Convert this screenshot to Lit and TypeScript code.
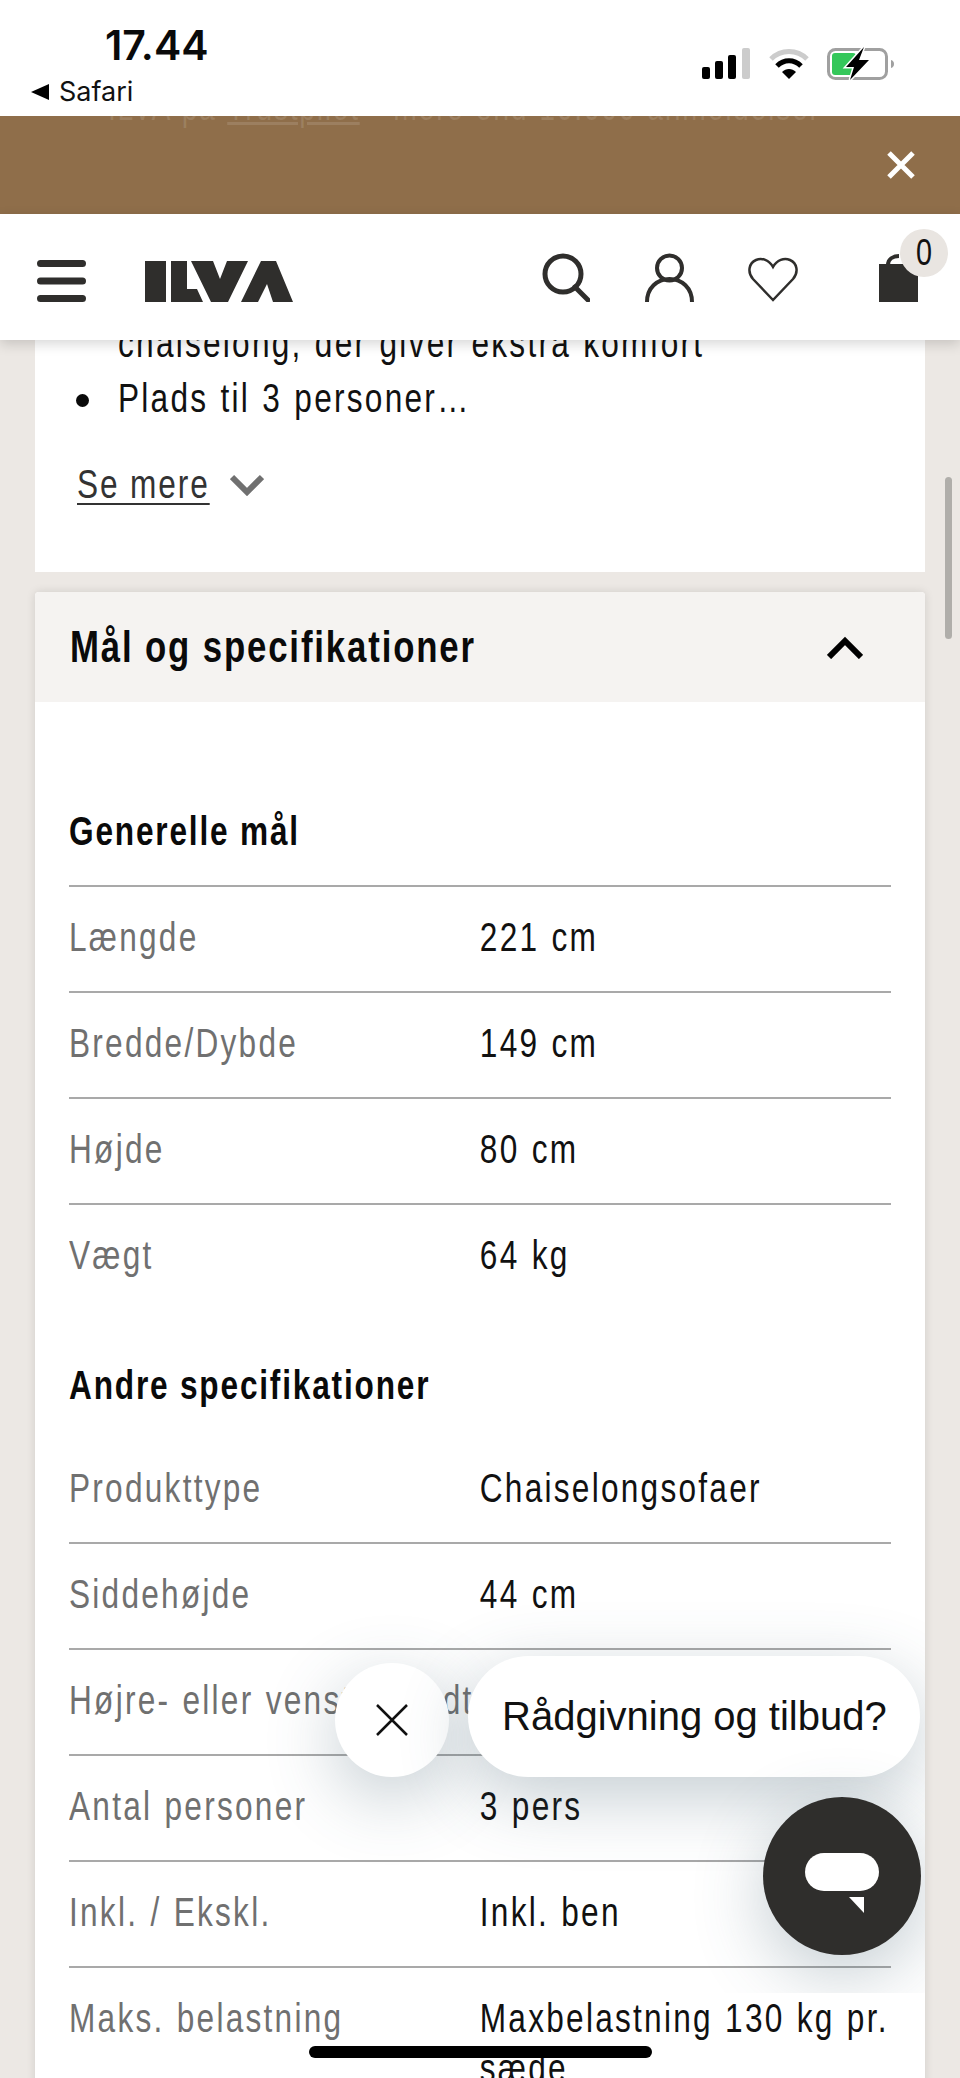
import { LitElement, html, css } from "lit";
import { customElement } from "lit/decorators.js";

const group1 = [["Længde","221 cm"],["Bredde/Dybde","149 cm"],["Højde","80 cm"],["Vægt","64 kg"]];
const group2 = [["Produkttype","Chaiselongsofaer"],["Siddehøjde","44 cm"],["Højre- eller venstrevendt",""],["Antal personer","3 pers"],["Inkl. / Ekskl.","Inkl. ben"],["Maks. belastning","Maxbelastning 130 kg pr. sæde"]];

@customElement("app-root")
export class AppRoot extends LitElement {
  static styles = css`
    :host { display:block; position:relative; width:960px; height:2078px; overflow:hidden; background:#ece8e4; font-family:"Liberation Sans",sans-serif; color:#111; }
    * { box-sizing:border-box; }
    .nar { transform:scaleX(.79); transform-origin:left center; white-space:nowrap; }
    .status { height:116px; background:#fff; position:relative; display:flex; justify-content:space-between; padding:24px 65px 0 31px; font-family:Inter,"Liberation Sans",sans-serif; }
    .clock { display:flex; flex-direction:column; }
    .time { font-size:41px; font-weight:600; line-height:42px; margin-left:74px; color:#0a0a0a; }
    .back { display:flex; align-items:center; gap:10px; font-size:27px; line-height:32px; margin-top:10px; }
    .sys { display:flex; align-items:flex-start; padding-top:24px; }
    .wifi { margin-left:18px; } .bat { margin-left:17px; margin-top:-3px; }
    .banner { height:98px; background:#8f6e4a; position:relative; overflow:hidden; display:flex; justify-content:flex-end; align-items:center; padding-right:45px; }
    .ghost { position:absolute; left:108px; top:-29px; color:rgba(255,255,255,.12); font-size:36px; letter-spacing:2.1px; word-spacing:2px; }
    .nav { height:126px; background:#fff; position:relative; z-index:2; box-shadow:0 4px 12px rgba(0,0,0,.16); }
    .nav-row { display:flex; align-items:flex-end; height:88px; padding-left:37px; }
    .logo { margin-left:59px; }
    .icons { margin-left:auto; display:flex; align-items:flex-end; padding-right:42px; }
    .ic-search { margin-right:55px; } .ic-user { margin-right:54px; } .ic-heart { margin-right:81px; }
    .bag { position:relative; display:block; height:49px; }
    .badge { position:absolute; left:21px; top:-24px; width:48px; height:48px; border-radius:50%; background:#e9e5e1; display:flex; align-items:center; justify-content:center; color:#111; }
    .badge span { display:block; font-size:36px; line-height:40px; transform:scaleX(.8); }
    .main { padding:0 35px; }
    .card { background:#fff; }
    .card.first { height:256px; margin-top:-24px; }
    .line { display:flex; align-items:center; height:55px; padding-left:41px; font-size:40px; letter-spacing:2.85px; word-spacing:1.5px; }
    .dot { flex:none; width:13px; height:13px; border-radius:50%; background:#0a0a0a; margin-right:29px; margin-top:4px; }
    .gap { flex:none; width:42px; }
    .more { display:flex; align-items:center; margin:31px 0 0 42px; height:55px; font-size:40px; letter-spacing:2.4px; color:#333; }
    .more span { display:block; flex:none; width:153px; text-decoration:underline; text-underline-offset:5px; text-decoration-thickness:2px; }
    .acc { margin-top:20px; box-shadow:0 0 10px rgba(0,0,0,.12); border-radius:4px 4px 0 0; background:#fff; }
    .acc-head { height:110px; background:#f5f3f1; display:flex; align-items:center; justify-content:space-between; padding:0 62px 0 35px; border-radius:4px 4px 0 0; }
    .acc-head h2 { margin:0; font-size:44px; font-weight:700; letter-spacing:2.35px; color:#0a0a0a; flex:none; width:420px; }
    .body { padding:102px 34px 0; }
    h3 { margin:0; font-size:40px; line-height:55px; font-weight:700; letter-spacing:2.3px; color:#0a0a0a; }
    .t1 { margin-top:26px; border-top:2px solid #a9a9a9; }
    .t2 { margin-top:25px; }
    .row { min-height:106px; border-bottom:2px solid #a9a9a9; padding:25px 0 0; }
    .row:last-child { border-bottom:none; }
    .cells { display:grid; grid-template-columns:520px 1fr; width:1060px; font-size:40px; line-height:50px; letter-spacing:2.85px; word-spacing:1.5px; white-space:normal; }
    .l { color:#707070; white-space:nowrap; } .v { color:#111; }
    .h2 { margin-top:47px; }
    .scroll { position:absolute; left:945px; top:477px; width:7px; height:162px; border-radius:4px; background:#b0aeaa; z-index:3; }
    .widget { position:absolute; left:200px; top:1540px; width:725px; height:453px; overflow:hidden; z-index:3; }
    .closeb { position:absolute; left:135px; top:123px; width:114px; height:114px; border-radius:50%; background:#fff; display:flex; align-items:center; justify-content:center; box-shadow:0 20px 70px rgba(60,90,105,.3); }
    .bubble { position:absolute; left:268px; top:116px; width:452px; height:121px; border-radius:61px; background:#fff; display:flex; align-items:center; padding-left:34px; font-size:40px; color:#111; box-shadow:0 20px 70px rgba(60,90,105,.3); white-space:nowrap; }
    .chat { position:absolute; left:563px; top:257px; width:158px; height:158px; border-radius:50%; background:#2f2e2c; display:flex; align-items:center; justify-content:center; box-shadow:0 20px 70px rgba(60,90,105,.3); }
    .chat svg { margin-top:14px; }
    .home { position:absolute; left:309px; top:2046px; width:343px; height:12px; border-radius:6px; background:#000; z-index:4; }
  `;

  rows(list: string[][]) {
    return list.map(([l, v]) => html`<div class="row"><div class="cells nar"><div class="l">${l}</div><div class="v">${v}</div></div></div>`);
  }

  render() {
    return html`
      <div class="status">
        <div class="clock">
          <div class="time">17.44</div>
          <div class="back"><svg width="18" height="16" viewBox="0 0 18 16"><path d="M0 8 18 0v16z" fill="#000"/></svg>Safari</div>
        </div>
        <div class="sys">
          <svg class="sig" width="48" height="31" viewBox="0 0 48 31">
            <rect x="0" y="19" width="8" height="12" rx="2" fill="#000"/><rect x="13" y="13" width="8" height="18" rx="2" fill="#000"/><rect x="26" y="7" width="8" height="24" rx="2" fill="#000"/><rect x="40" y="0" width="8" height="31" rx="2" fill="#ccc"/>
          </svg>
          <svg class="wifi" width="42" height="31" viewBox="0 0 42 31" fill="none">
            <path d="M3 11C13 1 29 1 39 11" stroke="#ccc" stroke-width="5"/>
            <path d="M9 18C16 11 26 11 33 18" stroke="#000" stroke-width="5"/>
            <path d="M14 24C18 20 24 20 28 24L21 31z" fill="#000"/>
          </svg>
          <svg class="bat" width="68" height="36" viewBox="0 0 68 36" fill="none">
            <rect x="1.500" y="4.500" width="58" height="29" rx="7" stroke="#a0a0a0" stroke-width="3"/>
            <rect x="5" y="8" width="24" height="22" rx="3" fill="#34c75a"/>
            <path d="M64 15c2 .5 3 2 3 4s-1 3.500-3 4z" fill="#a0a0a0"/>
            <path d="M37 2 19 22h8l-4 13 19-20H32z" fill="#000" stroke="#fff" stroke-width="3" paint-order="stroke"/>
          </svg>
        </div>
      </div>
      <div class="banner">
        <div class="ghost nar">ILVA på <u>Trustpilot</u> - mere end 10.000 anmeldelser</div>
        <svg width="28" height="28" viewBox="0 0 28 28"><path d="M2 2l24 24M26 2 2 26" stroke="#fff" stroke-width="5"/></svg>
      </div>
      <div class="nav">
        <div class="nav-row">
          <svg width="49" height="42" viewBox="0 0 49 42"><g stroke="#2f2e2c" stroke-width="7" stroke-linecap="round"><path d="M3.500 3.500h42M3.500 21h42M3.500 38.500h42"/></g></svg>
          <svg class="logo" width="148" height="41" viewBox="0 0 148 41"><g fill="#2f2e2c"><path d="M0 0h21v41H0z"/><path d="M26 0h16v28h10l6 13H26z"/><path d="M46 0h22l7 18 7-18h21L83 41H66z"/><path d="M116 0h15l17 41h-20l-6-18-9 18H96z"/></g></svg>
          <div class="icons">
            <svg class="ic-search" width="48" height="49" viewBox="0 0 48 49" fill="none" stroke="#2f2e2c" stroke-width="5"><circle cx="21" cy="21" r="18"/><path d="M33 34l13 13" stroke-linecap="round"/></svg>
            <svg class="ic-user" width="49" height="49" viewBox="0 0 49 49" fill="none" stroke="#2f2e2c" stroke-width="4"><circle cx="24.500" cy="15" r="12.500"/><path d="M2 49c0-14 10-23 22.500-23S47 35 47 49"/></svg>
            <svg class="ic-heart" width="50" height="45" viewBox="0 0 50 45" fill="none" stroke="#2f2e2c" stroke-width="2.500"><path d="M25 43 5 22C-1 15 1 6 8 3c6-2.500 13 0 17 7 4-7 11-9.500 17-7 7 3 9 12 3 19z"/></svg>
            <div class="bag"><svg width="39" height="49" viewBox="0 0 39 49"><path d="M9 12C9 6 14 3 20 3" fill="none" stroke="#2f2e2c" stroke-width="4"/><path d="M0 11h39v38H0z" fill="#2f2e2c"/></svg><div class="badge"><span>0</span></div></div>
          </div>
        </div>
      </div>
      <div class="main">
        <div class="card first">
          <div class="line"><i class="gap"></i><span class="nar">chaiselong, der giver ekstra komfort</span></div>
          <div class="line"><i class="dot"></i><span class="nar">Plads til 3 personer…</span></div>
          <div class="more"><span class="nar">Se mere</span><svg width="34" height="22" viewBox="0 0 34 22" fill="none" stroke="#707070" stroke-width="6"><path d="M2 3l15 15L32 3"/></svg></div>
        </div>
        <div class="acc">
          <div class="acc-head"><h2 class="nar">Mål og specifikationer</h2><svg width="36" height="23" viewBox="0 0 36 23" fill="none" stroke="#000" stroke-width="6"><path d="M2 21 18 5l16 16"/></svg></div>
          <div class="body">
            <h3 class="nar">Generelle mål</h3>
            <div class="t1">${this.rows(group1)}</div>
            <h3 class="h2 nar">Andre specifikationer</h3>
            <div class="t2">${this.rows(group2)}</div>
          </div>
        </div>
      </div>
      <div class="scroll"></div>
      <div class="widget">
        <div class="closeb"><svg width="32" height="32" viewBox="0 0 32 32"><path d="M1 1l30 30M31 1 1 31" stroke="#111" stroke-width="2.500"/></svg></div>
        <div class="bubble">Rådgivning og tilbud?</div>
        <div class="chat"><svg width="74" height="60" viewBox="0 0 74 60"><rect width="74" height="38" rx="19" fill="#fff"/><path d="M44 44H59V60z" fill="#fff"/></svg></div>
      </div>
      <div class="home"></div>
    `;
  }
}
